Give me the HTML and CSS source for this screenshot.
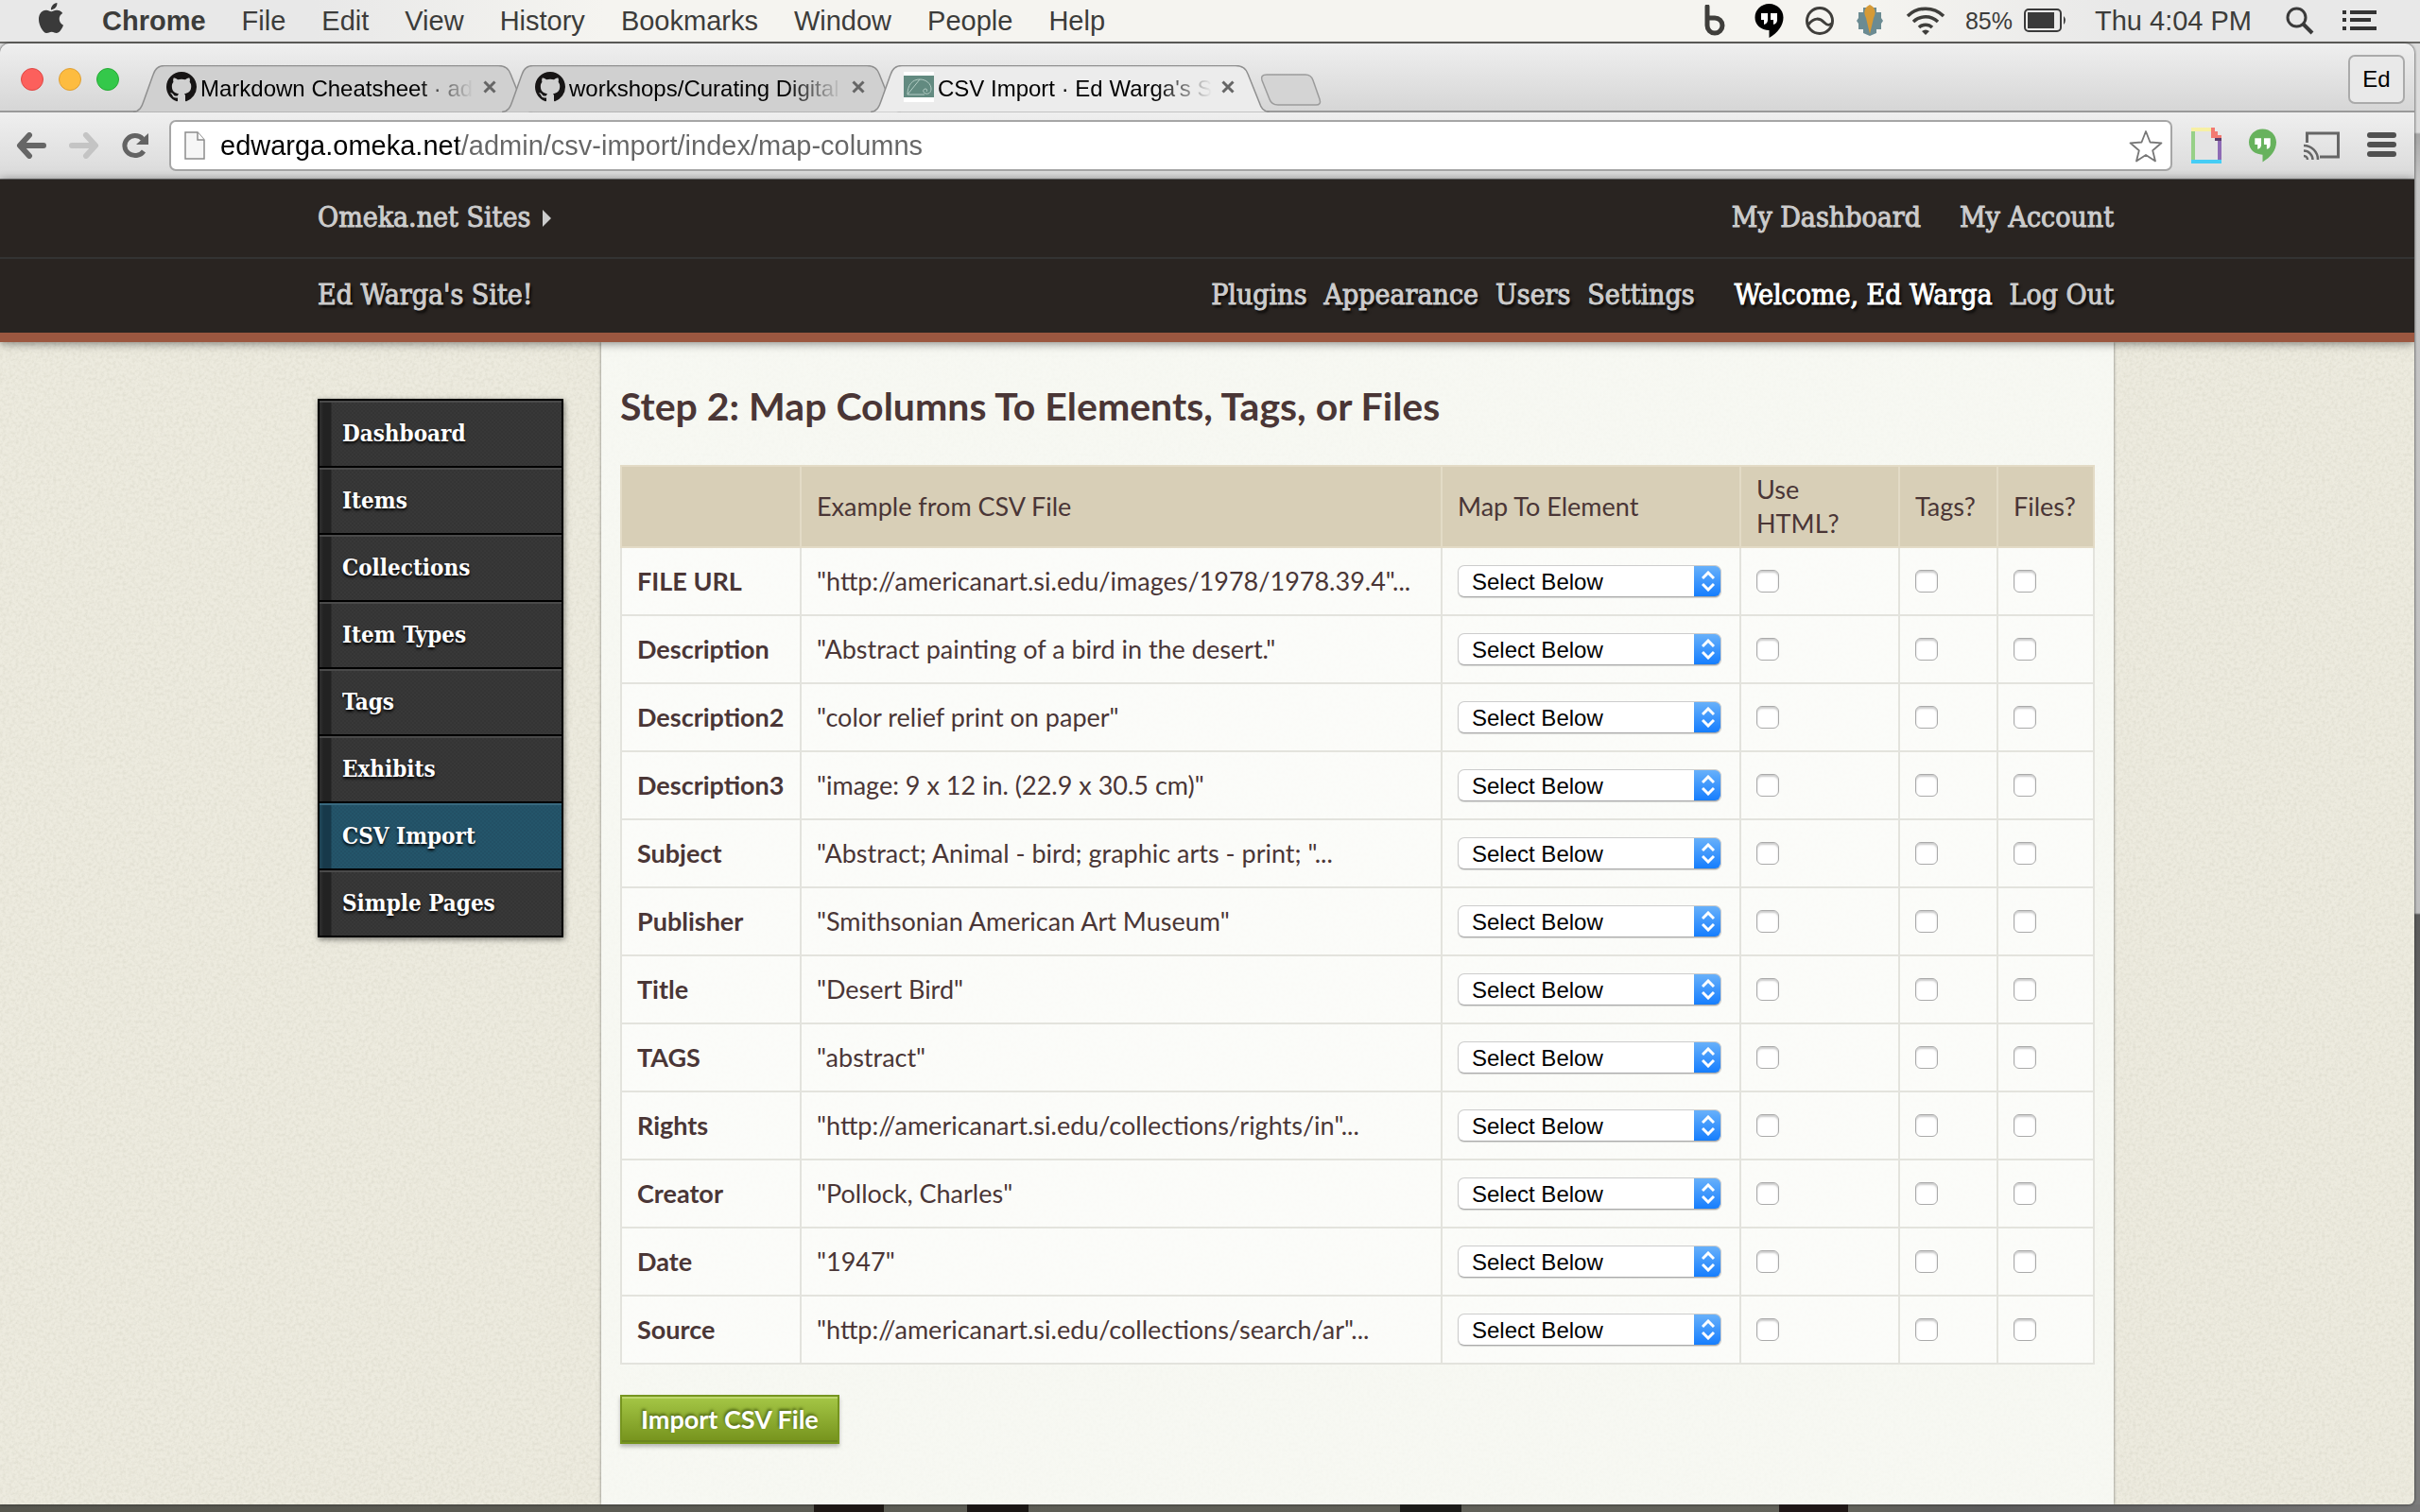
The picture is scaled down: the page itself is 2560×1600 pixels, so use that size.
FILE: index.html
```html
<!DOCTYPE html>
<html lang="en">
<head>
<meta charset="utf-8">
<title>CSV Import · Ed Warga's Site!</title>
<link rel="stylesheet" href="styles.css">
</head>
<body>
<svg class="defs" aria-hidden="true">
  <symbol id="github" viewBox="0 0 16 16"><path d="M8 0C3.58 0 0 3.58 0 8c0 3.54 2.29 6.53 5.47 7.59.4.07.55-.17.55-.38 0-.19-.01-.82-.01-1.49-2.01.37-2.53-.49-2.69-.94-.09-.23-.48-.94-.82-1.13-.28-.15-.68-.52-.01-.53.63-.01 1.08.58 1.23.82.72 1.21 1.87.87 2.33.66.07-.52.28-.87.51-1.07-1.78-.2-3.64-.89-3.64-3.95 0-.87.31-1.59.82-2.15-.08-.2-.36-1.02.08-2.12 0 0 .67-.21 2.2.82.64-.18 1.32-.27 2-.27s1.36.09 2 .27c1.53-1.04 2.2-.82 2.2-.82.44 1.1.16 1.92.08 2.12.51.56.82 1.27.82 2.15 0 3.07-1.87 3.75-3.65 3.95.29.25.54.73.54 1.48 0 1.07-.01 1.93-.01 2.2 0 .21.15.46.55.38A8.01 8.01 0 0 0 16 8c0-4.42-3.58-8-8-8z"/></symbol>
  <symbol id="tab-shape" viewBox="0 0 422 50" preserveAspectRatio="none"><path d="M0 49.5C7 49 9 44 11 38L21 10Q24 .5 33 .5H386Q396 .5 399 9L411 39C413 45 415 49 422 49.5"/></symbol>
  <symbol id="close" viewBox="0 0 14 14"><path d="M1.500 1.500l11 11M12.500 1.500l-11 11" fill="none" stroke="#666" stroke-width="3"/></symbol>
  <symbol id="quotes" viewBox="0 0 30 36"><path d="M15 0C6.500 0 0 6.500 0 14.500S6.500 28 15 28v8C24 31 30 23 30 14.500 30 6.500 23.500 0 15 0z"/><path fill="#fff" d="M6.500 10h7v7q0 4-4 5v-5h-3zM16.500 10h7v7q0 4-4 5v-5h-3z"/></symbol>
</svg>

<header class="menubar">
  <nav class="menus" aria-label="Application menus">
    <button class="apple" aria-label="Apple menu"><svg width="32" height="32" viewBox="0 0 24 24"><path fill="#3a3a3a" d="M12.152 6.896c-.948 0-2.415-1.078-3.96-1.04-2.04.027-3.91 1.183-4.961 3.014-2.117 3.675-.546 9.103 1.519 12.09 1.013 1.454 2.208 3.09 3.792 3.039 1.520-.065 2.090-.987 3.935-.987 1.831 0 2.350.987 3.960.948 1.637-.026 2.676-1.480 3.676-2.948 1.156-1.688 1.636-3.325 1.662-3.415-.039-.013-3.182-1.221-3.220-4.857-.026-3.040 2.480-4.494 2.597-4.559-1.429-2.090-3.623-2.324-4.390-2.376-2-.156-3.675 1.090-4.610 1.090zM15.530 3.830c.843-1.012 1.400-2.427 1.245-3.830-1.207.052-2.662.805-3.532 1.818-.780.896-1.454 2.338-1.273 3.714 1.338.104 2.715-.688 3.559-1.701"/></svg></button>
    <button class="app-name">Chrome</button>
    <button>File</button>
    <button>Edit</button>
    <button>View</button>
    <button>History</button>
    <button>Bookmarks</button>
    <button>Window</button>
    <button>People</button>
    <button>Help</button>
  </nav>
  <div class="status">
    <svg class="st-b" width="24" height="34" viewBox="0 0 24 34"><path d="M4 2v20a8 8 0 1 0 8-8H6" fill="none" stroke="#3f3e3b" stroke-width="5" stroke-linecap="round"/></svg>
    <svg class="st-quotes" width="31" height="36"><use href="#quotes"/></svg>
    <svg class="st-circle" width="32" height="32" viewBox="0 0 32 32" fill="none" stroke="#3f3e3b" stroke-width="3"><circle cx="16" cy="16" r="13.500"/><path d="M4 20c6-8 12-7 17-2 3 3 5 3 8 1"/></svg>
    <svg class="st-leaf" width="30" height="34" viewBox="0 0 30 34"><path fill="#6b8b92" d="M8 3h14v5h5v6l2 3-2 3v6h-5v4l-7 3-7-3v-4H3v-6l-2-3 2-3V8h5z"/><path fill="#d69a36" d="M15 0c6 3 7 8 4 14l-4 17-4-17C8 8 9 3 15 0z"/></svg>
    <svg class="st-wifi" width="42" height="32" viewBox="0 0 42 32" fill="none" stroke="#3f3e3b" stroke-width="3.500"><path d="M2 11a27 27 0 0 1 38 0M8 17a19 19 0 0 1 26 0M14 23a10 10 0 0 1 14 0"/><path d="M17 27q4-3 8 0l-4 4z" fill="#3f3e3b" stroke="none"/></svg>
    <span class="percent">85%</span>
    <svg class="st-battery" width="46" height="26" viewBox="0 0 46 26"><rect x="1" y="1" width="38" height="23" rx="4" fill="none" stroke="#3a3a3a" stroke-width="2"/><path fill="#3a3a3a" d="M4 4h28v17H4zM42 8q4 4 0 9z"/></svg>
    <time class="clock">Thu 4:04 PM</time>
    <svg class="st-search" width="30" height="30" viewBox="0 0 30 30" fill="none" stroke="#3a3a3a" stroke-width="3"><circle cx="11.500" cy="11.500" r="9.500"/><path d="M18 18l10 10" stroke-width="4"/></svg>
    <svg class="st-list" width="36" height="22" viewBox="0 0 36 22" fill="#333"><path d="M0 0h4v4H0zM8 0h28v4H8zM0 8h4v4H0zM8 8h22v4H8zM0 17h4v4H0zM8 17h28v4H8z"/></svg>
  </div>
</header>

<div class="window">
  <div class="tabstrip">
    <div class="lights">
      <button class="light red" aria-label="Close window"></button>
      <button class="light yellow" aria-label="Minimize window"></button>
      <button class="light green" aria-label="Zoom window"></button>
    </div>
    <div class="tabs">
      <div class="tab"><svg class="tab-bg"><use href="#tab-shape"/></svg><svg class="favicon"><use href="#github"/></svg><a class="tab-title" href="#">Markdown Cheatsheet · ad</a><button class="tab-close" aria-label="Close tab"><svg><use href="#close"/></svg></button></div>
      <div class="tab"><svg class="tab-bg"><use href="#tab-shape"/></svg><svg class="favicon"><use href="#github"/></svg><a class="tab-title" href="#">workshops/Curating Digital</a><button class="tab-close" aria-label="Close tab"><svg><use href="#close"/></svg></button></div>
      <div class="tab active"><svg class="tab-bg"><use href="#tab-shape"/></svg><svg class="favicon" viewBox="0 0 32 32"><path fill="#fff" d="M0 0h32v32H0z"/><path fill="#628a80" d="M0 4h32v23H0z"/><path d="M4 24C4 14 9 8 17 8c7 0 12 5 12 10 0 4-3 6-6 5-3-1-3-5 0-5 2 0 2 2 1 3M4 24h18M4 24L17 8" fill="none" stroke="#b3ccc4" stroke-width="1"/></svg><a class="tab-title" href="#">CSV Import · Ed Warga's S</a><button class="tab-close" aria-label="Close tab"><svg><use href="#close"/></svg></button></div>
      <button class="new-tab" aria-label="New tab"><svg width="66" height="34" viewBox="0 0 66 34"><path d="M8 1h41q6 0 8 6l7 20q2 6-4 6H20q-7 0-9-6L3 7q-2-6 5-6z" fill="#d4d4d4" stroke="#9b9b9b" stroke-width="1.500"/></svg></button>
    </div>
    <button class="profile">Ed</button>
  </div>

  <div class="toolbar">
    <div class="tools">
      <button aria-label="Back"><svg width="32" height="28" viewBox="0 0 32 28" fill="none" stroke="#666" stroke-width="6" stroke-linecap="round" stroke-linejoin="round"><path d="M29 14H5M14 3L4 14l10 11"/></svg></button>
      <button aria-label="Forward" disabled><svg width="32" height="28" viewBox="0 0 32 28" fill="none" stroke="#c4c4c4" stroke-width="6" stroke-linecap="round" stroke-linejoin="round"><path d="M3 14h24M18 3l10 11-10 11"/></svg></button>
      <button aria-label="Reload"><svg width="30" height="28" viewBox="0 0 30 28"><path d="M23 20a11 10.500 0 1 1-1-13" fill="none" stroke="#636363" stroke-width="5"/><path d="M28 1v12H15z" fill="#636363"/></svg></button>
    </div>
    <div class="omnibox">
      <svg width="22" height="30" viewBox="0 0 22 30"><path d="M1 1h13l7 8v20H1z" fill="#f6f6f6" stroke="#8c8c8c" stroke-width="1.500"/><path d="M14 1v8h7" fill="#fff" stroke="#8c8c8c" stroke-width="1.500"/></svg>
      <input class="url" type="text" aria-label="Address" value="edwarga.omeka.net/admin/csv-import/index/map-columns">
      <button aria-label="Bookmark this page"><svg width="36" height="35" viewBox="0 0 36 35"><path d="M18 2l4.500 11.500 12 .8-9.300 8L28 33.500l-10-6.500-10 6.500 2.800-11.200-9.300-8 12-.8z" fill="#fff" stroke="#777" stroke-width="1.800" stroke-linejoin="round"/></svg></button>
    </div>
    <div class="tools extensions">
      <button aria-label="Page colors"><svg width="32" height="38" viewBox="0 0 32 38"><path fill="#e4e4e4" d="M3 2h20v9h6v24H3z"/><path fill="#f7f0a4" d="M0 0h21v4H0z"/><path fill="#97d087" d="M0 4h4v30H0z"/><path fill="#f37a72" d="M21 0h4v4h3v4h4v3H21z"/><path fill="#5a3d6b" d="M25 11h7v3h-7z"/><path fill="#8e6bb5" d="M28 14h4v20h-4z"/><path fill="#46cdf5" d="M0 34h32v4H0z"/></svg></button>
      <button aria-label="Hangouts"><svg width="29" height="36" fill="#67b25d"><use href="#quotes"/></svg></button>
      <button aria-label="Cast"><svg width="38" height="30" viewBox="0 0 38 30" fill="none" stroke="#666" stroke-width="3"><path d="M3.500 12V2h33v25H17"/><path d="M0 26a4 4 0 0 1 4 4M0 20.500A9.500 9.500 0 0 1 9.500 30M0 15a15 15 0 0 1 15 15" stroke-width="2.500"/></svg></button>
      <button aria-label="Menu"><svg width="31" height="28" viewBox="0 0 31 28" fill="#505050"><rect width="31" height="6" rx="3"/><rect y="10" width="31" height="6" rx="3"/><rect y="20" width="31" height="6" rx="3"/></svg></button>
    </div>
  </div>

  <div class="page">
    <header class="site-header">
      <div class="bar">
        <div class="wrap">
          <a href="#">Omeka.net Sites <span class="arrow"></span></a>
          <nav class="account"><a href="#">My Dashboard</a><a href="#">My Account</a></nav>
        </div>
      </div>
      <div class="bar shadowed">
        <div class="wrap">
          <a href="#">Ed Warga's Site!</a>
          <nav class="admin"><a href="#">Plugins</a><a href="#">Appearance</a><a href="#">Users</a><a href="#">Settings</a><a class="welcome" href="#">Welcome, Ed Warga</a><a href="#">Log Out</a></nav>
        </div>
      </div>
    </header>

    <div class="wrap body">
      <nav class="sidebar" aria-label="Content">
        <a href="#">Dashboard</a>
        <a href="#">Items</a>
        <a href="#">Collections</a>
        <a href="#">Item Types</a>
        <a href="#">Tags</a>
        <a href="#">Exhibits</a>
        <a class="current" href="#">CSV Import</a>
        <a href="#">Simple Pages</a>
      </nav>
      <main class="panel">
        <h2>Step 2: Map Columns To Elements, Tags, or Files</h2>
        <form>
          <table>
            <colgroup><col class="c-name"><col class="c-example"><col class="c-map"><col class="c-html"><col class="c-tags"><col class="c-files"></colgroup>
            <thead>
              <tr><th></th><th>Example from CSV File</th><th>Map To Element</th><th>Use<br>HTML?</th><th>Tags?</th><th>Files?</th></tr>
            </thead>
            <tbody id="rows"></tbody>
          </table>
          <button class="submit" type="submit">Import CSV File</button>
        </form>
      </main>
    </div>
  </div>
</div>
<script src="rows.js"></script>
</body>
</html>
```
FILE: rows.js
```js
const columns = [
  ['FILE URL', '"http://americanart.si.edu/images/1978/1978.39.4"...'],
  ['Description', '"Abstract painting of a bird in the desert."'],
  ['Description2', '"color relief print on paper"'],
  ['Description3', '"image: 9 x 12 in. (22.9 x 30.5 cm)"'],
  ['Subject', '"Abstract; Animal - bird; graphic arts - print; "...'],
  ['Publisher', '"Smithsonian American Art Museum"'],
  ['Title', '"Desert Bird"'],
  ['TAGS', '"abstract"'],
  ['Rights', '"http://americanart.si.edu/collections/rights/in"...'],
  ['Creator', '"Pollock, Charles"'],
  ['Date', '"1947"'],
  ['Source', '"http://americanart.si.edu/collections/search/ar"...']
];

const box = (name, label) =>
  `<td><input type="checkbox" aria-label="${label} for ${name}"></td>`;

document.getElementById('rows').innerHTML = columns.map(([name, example]) => `
  <tr>
    <th scope="row">${name}</th>
    <td>${example}</td>
    <td><select aria-label="Element for ${name}"><option>Select Below</option></select></td>
    ${box(name, 'Use HTML')}${box(name, 'Tags')}${box(name, 'Files')}
  </tr>`).join('');
```
FILE: styles.css
```css
:root {
  --sans: "Liberation Sans", Arial, sans-serif;
  --slab: "DejaVu Serif Condensed", "DejaVu Serif", serif;
  --body: Lato, "Open Sans", sans-serif;
  --grain: url("data:image/svg+xml,%3Csvg xmlns='http://www.w3.org/2000/svg' width='200' height='200'%3E%3Cfilter id='n'%3E%3CfeTurbulence type='fractalNoise' baseFrequency='.3' numOctaves='3' stitchTiles='stitch'/%3E%3CfeColorMatrix values='0 0 0 0 .35 0 0 0 0 .34 0 0 0 0 .25 .3 0 0 0 -.11'/%3E%3C/filter%3E%3Crect width='200' height='200' filter='url(%23n)'/%3E%3C/svg%3E");
}

* { box-sizing: border-box; }

body {
  margin: 0;
  min-height: 100vh;
  display: flex;
  flex-direction: column;
  background:
    linear-gradient(90deg, transparent 861px, #1d1714 861px 935px, transparent 935px 1023px, #1a1614 1023px 1088px, transparent 1088px 1481px, #1b1b18 1481px 1546px, transparent 1546px 1882px, #1f1716 1882px 1955px, transparent 1955px) bottom / 100% 8px no-repeat,
    linear-gradient(90deg, #56564e 0, #62625a 1955px, #5a5a5a 2100px, #777 100%) bottom / 100% 8px no-repeat,
    linear-gradient(#dcdcdc 140px, #a6a6a6 142px, #c6c6c6 190px, #bfbfbf 966px, #5b5b5b 968px, #7c7c7c 1400px);
  font-family: var(--sans);
}

button {
  padding: 0;
  border: 0;
  background: none;
  color: inherit;
  font: inherit;
}

a { color: inherit; text-decoration: none; }
svg { display: block; }
.defs { position: absolute; width: 0; height: 0; }

/* Menu bar */
.menubar {
  display: flex;
  justify-content: space-between;
  align-items: center;
  height: 46px;
  padding: 0 46px 0 38px;
  border-bottom: 2px solid #6b6a67;
  background: linear-gradient(90deg, #e8e8e8 13%, #f5f4f0 25%, #f5f4f0 77%, #e8e8e8 88%);
  color: #3c3c3a;
  font-size: 29px;
}
.menus { display: flex; align-items: center; gap: 38px; }
.menus .apple { margin: -6px 0 0; }
.menus .app-name { font-weight: bold; }
.status { display: flex; align-items: center; }
.st-quotes { margin-left: 30px; }
.st-circle { margin-left: 22px; }
.st-leaf { margin-left: 22px; }
.st-wifi { margin-left: 23px; }
.percent { margin-left: 21px; font-size: 25px; }
.st-battery { margin-left: 12px; }
.clock { margin-left: 29px; }
.st-search { margin-left: 36px; }
.st-list { margin-left: 30px; }

/* Browser window */
.window {
  flex: 1;
  display: flex;
  flex-direction: column;
  margin: 0 6px 8px 0;
  border-radius: 10px 10px 6px 0;
  overflow: hidden;
  box-shadow: 0 0 3px #222;
}
.tabstrip {
  display: flex;
  height: 73px;
  padding: 0 10px 0 22px;
  border-bottom: 2px solid #9a9a9a;
  background: linear-gradient(#efefef, #d6d6d6);
}
.lights { display: flex; gap: 16px; padding-top: 26px; }
.light { width: 24px; height: 24px; border: 1px solid; border-radius: 50%; }
.red { background: #fc605c; border-color: #df4744; }
.yellow { background: #fdbc40; border-color: #de9f34; }
.green { background: #34c84a; border-color: #27aa35; }
.tabs { flex: 1; display: flex; align-items: flex-start; margin-left: 15px; padding-top: 23px; }
.tab {
  position: relative;
  display: flex;
  align-items: center;
  width: 422px;
  height: 50px;
  margin-right: -32px;
  padding: 0 38px 5px 35px;
  font-size: 24px;
  fill: #171515;
}
.tab-bg { position: absolute; inset: 0; width: 100%; height: 100%; fill: #d0d0d0; stroke: #8f8f8f; stroke-width: 1.5px; }
.tab.active .tab-bg { fill: #ececec; }
.favicon { position: relative; flex: none; width: 32px; height: 32px; }
.tab-title {
  position: relative;
  flex: 1;
  margin: 0 10px 0 4px;
  padding-top: 4px;
  white-space: nowrap;
  color: #000;
  -webkit-mask-image: linear-gradient(90deg, #000 calc(100% - 60px), transparent);
  mask-image: linear-gradient(90deg, #000 calc(100% - 60px), transparent);
}
.tab-close { position: relative; }
.tab-close svg { width: 14px; height: 14px; }
.new-tab { margin: 9px 0 0 21px; }
.profile {
  width: 60px;
  height: 52px;
  margin-top: 12px;
  border: 2px solid #aaa;
  border-radius: 7px;
  background: #e9e9e9;
  color: #000;
  font-size: 24px;
}
.toolbar {
  display: flex;
  align-items: center;
  height: 71px;
  padding: 0 19px 0 17px;
  border-bottom: 1px solid #777;
  background: linear-gradient(#efefef, #dadada);
}
.tools { display: flex; align-items: center; gap: 24px; }
.extensions { gap: 29px; }
.omnibox {
  flex: 1;
  display: flex;
  align-items: center;
  height: 54px;
  margin: 0 20px;
  padding: 0 8px 0 14px;
  border: 2px solid #a6a6a6;
  border-radius: 7px;
  background: #fff;
}
.url {
  flex: 1;
  margin: 0 16px;
  padding: 0;
  border: 0;
  background: linear-gradient(90deg, #000 252px, #666 252px);
  -webkit-background-clip: text;
  background-clip: text;
  color: transparent;
  font: 29px var(--sans);
}

/* Omeka admin page */
.page {
  flex: 1;
  display: flex;
  flex-direction: column;
  background: var(--grain), #edebdf;
}
.wrap {
  width: 100%;
  max-width: 1918px;
  margin: 0 auto;
  padding-left: 18px;
}
.site-header {
  position: relative;
  border-bottom: 10px solid #9b5740;
  background: #292421;
  box-shadow: 0 1px 10px rgba(0, 0, 0, .5);
  color: #ccc;
  font: 30px/36px var(--slab);
  -webkit-text-stroke: 1px currentColor;
}
.bar + .bar { border-top: 2px solid #333; }
.bar .wrap { display: flex; justify-content: space-between; padding-top: 22px; padding-bottom: 24px; }
.shadowed .wrap { padding-top: 20px; padding-bottom: 22px; text-shadow: 2px 3px 3px #000; }
.arrow {
  display: inline-block;
  margin-left: 4px;
  border-left: 9px solid #ccc;
  border-top: 9px solid transparent;
  border-bottom: 9px solid transparent;
}
.account { display: flex; gap: 41px; }
.admin { display: flex; gap: 18px; }
.welcome { margin-left: 24px; color: #fff; }
.body { flex: 1; display: flex; }
.sidebar {
  flex: none;
  align-self: flex-start;
  width: 260px;
  margin: 60px 40px 0 0;
  border: 2px solid #000;
  box-shadow: 1px 2px 6px rgba(0, 0, 0, .5);
  color: #fff;
  font: bold 24px/32px var(--slab);
  text-shadow: 0 2px 3px #000;
}
.sidebar a {
  display: block;
  padding: 19px 0 18px 24px;
  border-bottom: 2px solid #000;
  background:
    linear-gradient(90deg, #2c2c2c 2px, #222 4px 12px, transparent 13px),
    repeating-conic-gradient(#383838 0 25%, #343434 0 50%) 0 0 / 4px 4px;
  box-shadow: inset 0 2px #4a4a4a;
}
.sidebar a:last-child { border-bottom: 0; }
.sidebar .current {
  background:
    linear-gradient(90deg, #1e4456 2px, #17394a 4px 12px, transparent 13px),
    repeating-conic-gradient(#24556a 0 25%, #225065 0 50%) 0 0 / 4px 4px;
  box-shadow: inset 0 2px #39697f;
}
.panel {
  flex: 1;
  min-width: 0;
  padding: 44px 20px 64px;
  background: linear-gradient(rgba(250, 252, 248, .78), rgba(250, 252, 248, .78));
  box-shadow: 0 0 3px rgba(0, 0, 0, .5);
  color: #4a3636;
  font: 27px/36px var(--body);
}
h2 { margin: 0 0 38px; font-size: 41px; line-height: 48px; }
table {
  width: 100%;
  table-layout: fixed;
  border-collapse: collapse;
  background: rgba(255, 255, 255, .5);
}
.c-name { width: 190px; }
.c-map { width: 316px; }
.c-html { width: 168px; }
.c-tags { width: 104px; }
.c-files { width: 102px; }
th, td { padding: 0 16px; border: 2px solid #e3e3dd; text-align: left; }
thead th { height: 86px; border-color: #e3dbc6; background: #d8cfb7; font-weight: normal; }
tbody tr { height: 72px; }
td:nth-child(2) { white-space: nowrap; }
select {
  -webkit-appearance: none;
  appearance: none;
  display: block;
  width: 279px;
  height: 34px;
  padding: 0 32px 0 14px;
  border: 1px solid #ccc;
  border-bottom-color: #aaa;
  border-radius: 7px;
  background:
    url("data:image/svg+xml,%3Csvg xmlns='http://www.w3.org/2000/svg' width='14' height='22' fill='none' stroke='%23fff' stroke-width='3'%3E%3Cpath d='M1 8l6-6 6 6M1 14l6 6 6-6'/%3E%3C/svg%3E") right 7px center no-repeat border-box,
    linear-gradient(#6ab2fa, #137cfe) right / 29px 100% no-repeat border-box,
    #fff;
  box-shadow: 0 1px 1px rgba(0, 0, 0, .15);
  color: #000;
  font: 24px var(--sans);
}
input[type="checkbox"] {
  -webkit-appearance: none;
  appearance: none;
  display: block;
  width: 24px;
  height: 24px;
  margin: 0;
  border: 1px solid #aaa;
  border-radius: 6px;
  background: #fff;
  box-shadow: inset 0 2px 2px #ccc;
}
.submit {
  display: block;
  height: 52px;
  margin-top: 32px;
  padding: 0 20px;
  border: 2px solid #76951f;
  background: linear-gradient(#a5c746, #75921c);
  box-shadow: inset 0 2px #bdd66d, inset 0 -2px #6b8520, 0 3px 4px rgba(0, 0, 0, .25);
  color: #fff;
  font-weight: bold;
  text-shadow: -1px -2px 3px #4d6413;
}
```
